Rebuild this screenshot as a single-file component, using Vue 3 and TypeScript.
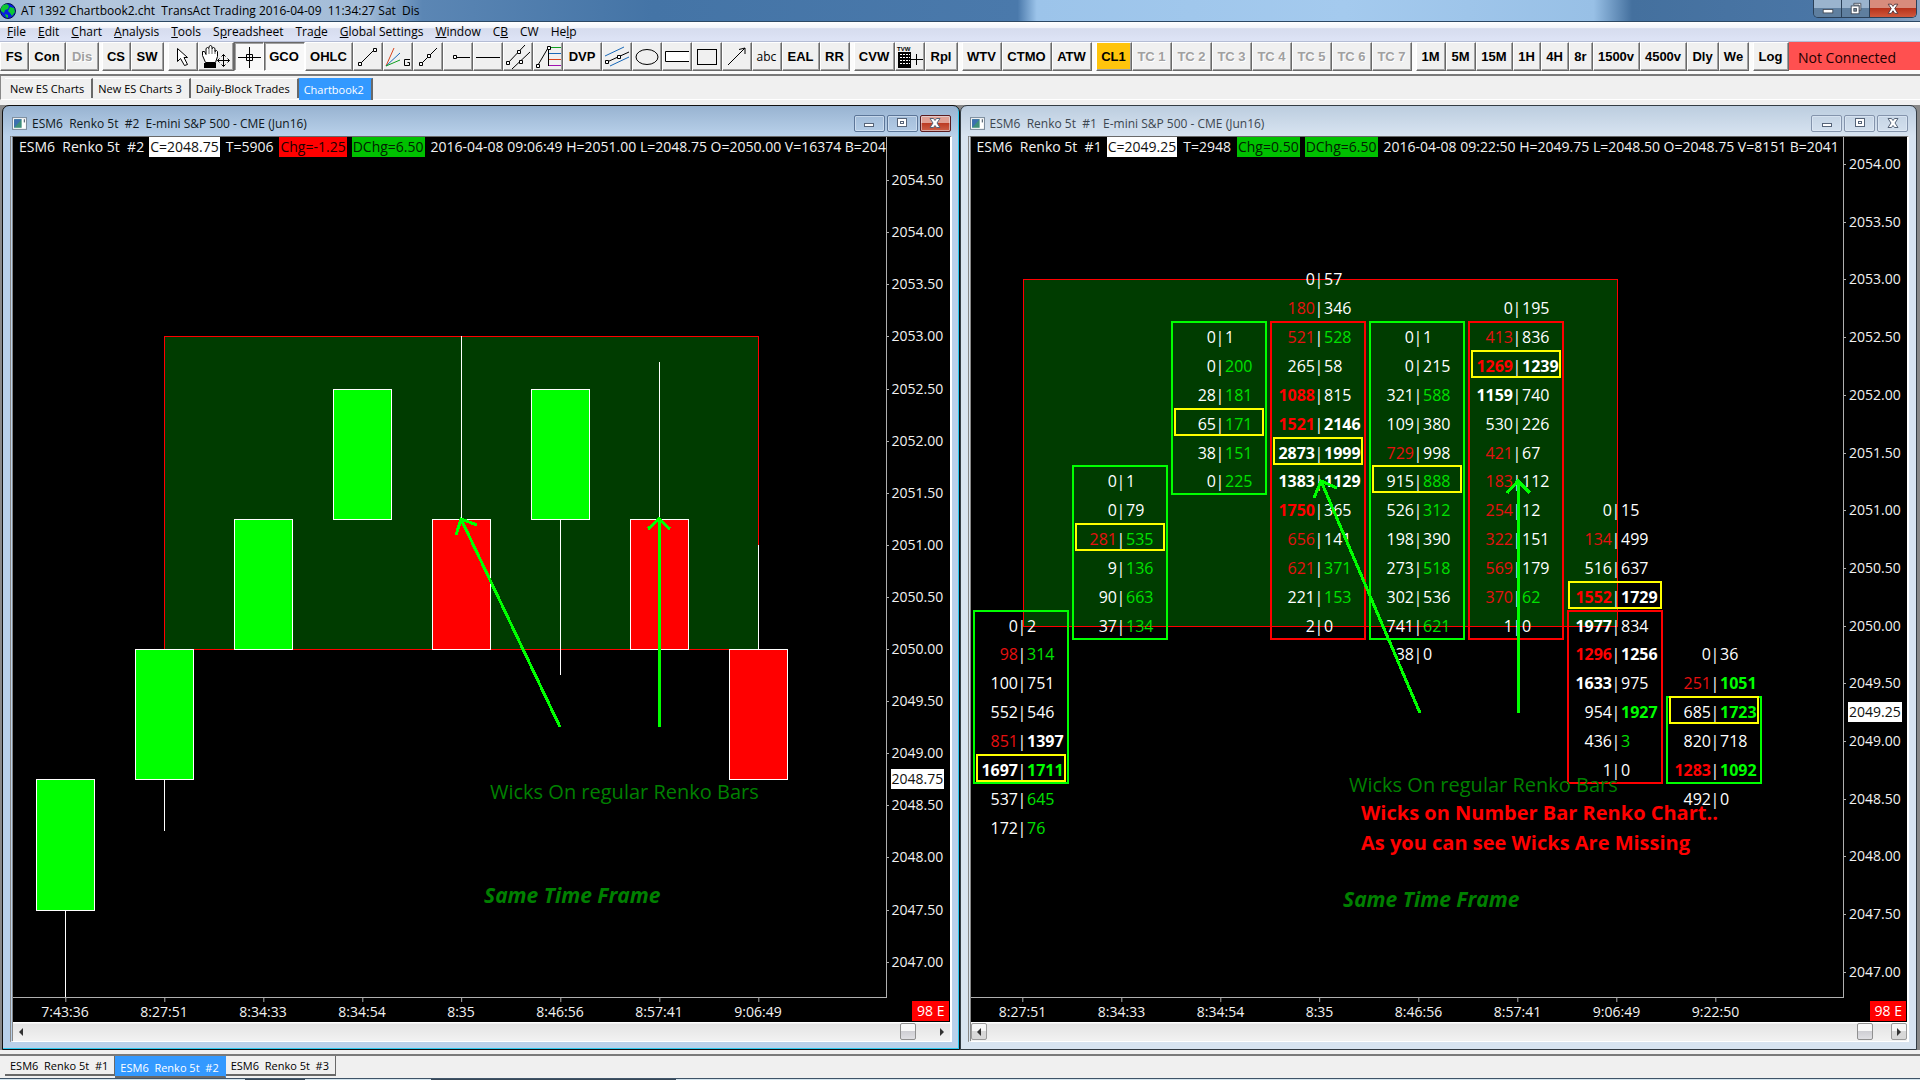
<script setup lang="ts">
import { computed } from 'vue'

interface Tool { id: string; w: number; icon?: string; off?: boolean; down?: boolean; gold?: boolean; thin?: boolean }
interface Candle { open: number; close: number; high?: number; low?: number }
interface Arrow { x1: number; y1: number; x2: number; y2: number; a: [number, number]; b: [number, number] }
interface Note { text: string; x: number; y: number; kind: string }
interface Column { top: number; box: [number, number]; up: boolean; poc: number; rows: string[] }

const menus: [string, string, string][] = [
  ['', 'F', 'ile'], ['', 'E', 'dit'], ['', 'C', 'hart'], ['', 'A', 'nalysis'], ['', 'T', 'ools'],
  ['S', 'p', 'readsheet'], ['Tra', 'd', 'e'], ['', 'G', 'lobal Settings'], ['', 'W', 'indow'],
  ['C', 'B', ''], ['CW', '', ''], ['He', 'l', 'p'],
]

const toolGroups: Tool[][] = [
  [{ id: 'FS', w: 29 }, { id: 'Con', w: 37 }, { id: 'Dis', w: 33, off: true }],
  [{ id: 'CS', w: 29 }, { id: 'SW', w: 33 }],
  [
    { id: 'Pointer', w: 30, icon: 'pointer' }, { id: 'Hand', w: 36, icon: 'hand' },
    { id: 'Crosshair', w: 30, icon: 'cross', down: true }, { id: 'GCO', w: 41, down: true }, { id: 'OHLC', w: 48 },
    { id: 'Line', w: 30, icon: 'line' }, { id: 'Gann fan', w: 30, icon: 'fan' }, { id: 'Ray', w: 30, icon: 'ray' },
    { id: 'Horizontal ray', w: 30, icon: 'hray' }, { id: 'Horizontal line', w: 30, icon: 'hline' },
    { id: 'Parallel lines', w: 30, icon: 'parallel' }, { id: 'Retracement', w: 30, icon: 'fib' },
    { id: 'DVP', w: 39 }, { id: 'Channel', w: 30, icon: 'channel' }, { id: 'Ellipse', w: 30, icon: 'ellipse' },
    { id: 'Extending rectangle', w: 30, icon: 'rect' }, { id: 'Rectangle', w: 30, icon: 'square' },
    { id: 'Arrow', w: 30, icon: 'arrow' }, { id: 'abc', w: 30, thin: true }, { id: 'EAL', w: 38 }, { id: 'RR', w: 30 },
  ],
  [{ id: 'CVW', w: 41 }, { id: 'Trade window', w: 30, icon: 'tvw' }, { id: 'Rpl', w: 33 }],
  [{ id: 'WTV', w: 40 }, { id: 'CTMO', w: 50 }, { id: 'ATW', w: 40 }],
  [
    { id: 'CL1', w: 36, gold: true },
    ...[1, 2, 3, 4, 5, 6, 7].map((n) => ({ id: `TC ${n}`, w: 40, off: true })),
  ],
  [
    { id: '1M', w: 30 }, { id: '5M', w: 30 }, { id: '15M', w: 37 }, { id: '1H', w: 28 }, { id: '4H', w: 28 },
    { id: '8r', w: 24 }, { id: '1500v', w: 47 }, { id: '4500v', w: 47 }, { id: 'Dly', w: 32 }, { id: 'We', w: 30 },
  ],
  [{ id: 'Log', w: 36 }],
]

const bookTabs = ['New ES Charts', 'New ES Charts 3', 'Daily-Block Trades', 'Chartbook2']
const chartTabs = ['ESM6  Renko 5t  #1', 'ESM6  Renko 5t  #2', 'ESM6  Renko 5t  #3']

const STEP = 99
const FIRST = 52
const cx = (i: number): number => FIRST + STEP * i + 0.5

const candles: Candle[] = [
  { open: 2047.5, close: 2048.75, low: 2046 },
  { open: 2048.75, close: 2050, low: 2048.25 },
  { open: 2050, close: 2051.25 },
  { open: 2051.25, close: 2052.5 },
  { open: 2051.25, close: 2050, high: 2053 },
  { open: 2051.25, close: 2052.5, low: 2049.75 },
  { open: 2051.25, close: 2050, high: 2052.75 },
  { open: 2050, close: 2048.75, high: 2051 },
]

// Each row reads bid|ask; a leading "r" marks a red bid, a leading "g" a green ask.
const columns: Column[] = [
  { top: 2050, box: [2050, 2048.75], up: true, poc: 2048.75, rows: ['0|2', 'r98|g314', '100|751', '552|546', 'r851|1397', '1697|g1711', '537|g645', '172|g76'] },
  { top: 2051.25, box: [2051.25, 2050], up: true, poc: 2050.75, rows: ['0|1', '0|79', 'r281|g535', '9|g136', '90|g663', '37|g134'] },
  { top: 2052.5, box: [2052.5, 2051.25], up: true, poc: 2051.75, rows: ['0|1', '0|g200', '28|g181', '65|g171', '38|g151', '0|g225'] },
  { top: 2053, box: [2052.5, 2050], up: false, poc: 2051.5, rows: ['0|57', 'r180|346', 'r521|g528', '265|58', 'r1088|815', 'r1521|2146', '2873|1999', '1383|1129', 'r1750|365', 'r656|141', 'r621|g371', '221|g153', '2|0'] },
  { top: 2052.5, box: [2052.5, 2050], up: true, poc: 2051.25, rows: ['0|1', '0|215', '321|g588', '109|380', 'r729|998', '915|g888', '526|g312', '198|390', '273|g518', '302|536', '741|g621', '38|0'] },
  { top: 2052.75, box: [2052.5, 2050], up: false, poc: 2052.25, rows: ['0|195', 'r413|836', 'r1269|1239', '1159|740', '530|226', 'r421|67', 'r183|112', 'r254|12', 'r322|151', 'r569|179', 'r370|g62', '1|0'] },
  { top: 2051, box: [2050, 2048.75], up: false, poc: 2050.25, rows: ['0|15', 'r134|499', '516|637', 'r1552|1729', '1977|834', 'r1296|1256', '1633|975', '954|g1927', '436|g3', '1|0'] },
  { top: 2049.75, box: [2049.25, 2048.75], up: true, poc: 2049.25, rows: ['0|36', 'r251|g1051', '685|g1723', '820|718', 'r1283|g1092', '492|0'] },
]

const range = (from: number, to: number): number[] =>
  Array.from({ length: (from - to) * 2 + 1 }, (_, i) => from - i * 0.5)

const scale = (base: number, unit: number) => (p: number): number => Math.round(base + (2053 - p) * unit)
const yBars = scale(199.4, 104.2)
const yNums = scale(142.4, 115.4)

const charts = [
  {
    id: 2, active: true, y: yBars, last: 2048.75, prices: range(2054.5, 2047),
    stats: [
      { t: 'C=2048.75', k: 'white' }, { t: 'T=5906', k: '' }, { t: 'Chg=-1.25', k: 'red' }, { t: 'DChg=6.50', k: 'green' },
      { t: '2016-04-08 09:06:49 H=2051.00 L=2048.75 O=2050.00 V=16374 B=2041', k: '' },
    ],
    times: ['7:43:36', '8:27:51', '8:34:33', '8:34:54', '8:35', '8:46:56', '8:57:41', '9:06:49'],
    region: { from: 1, to: 7 },
    arrows: [
      { x1: 547, y1: 590, x2: 448, y2: 382, a: [443, 398], b: [464, 388] },
      { x1: 646, y1: 590, x2: 646, y2: 382, a: [635, 392], b: [657, 392] },
    ] as Arrow[],
    notes: [
      { text: 'Wicks On regular Renko Bars', x: 477, y: 662, kind: 'plain' },
      { text: 'Same Time Frame', x: 471, y: 766, kind: 'slant' },
    ] as Note[],
  },
  {
    id: 1, active: false, y: yNums, last: 2049.25, prices: range(2054, 2047),
    stats: [
      { t: 'C=2049.25', k: 'white' }, { t: 'T=2948', k: '' }, { t: 'Chg=0.50', k: 'green' }, { t: 'DChg=6.50', k: 'green' },
      { t: '2016-04-08 09:22:50 H=2049.75 L=2048.50 O=2048.75 V=8151 B=2041', k: '' },
    ],
    times: ['8:27:51', '8:34:33', '8:34:54', '8:35', '8:46:56', '8:57:41', '9:06:49', '9:22:50'],
    region: { from: 0, to: 6 },
    arrows: [
      { x1: 449, y1: 576, x2: 350, y2: 344, a: [343, 361], b: [366, 351] },
      { x1: 547, y1: 576, x2: 547, y2: 344, a: [536, 356], b: [559, 356] },
    ] as Arrow[],
    notes: [
      { text: 'Wicks On regular Renko Bars', x: 378, y: 655, kind: 'plain' },
      { text: 'Wicks on Number Bar Renko Chart..', x: 390, y: 683, kind: 'alert' },
      { text: 'As you can see Wicks Are Missing', x: 390, y: 713, kind: 'alert' },
      { text: 'Same Time Frame', x: 372, y: 770, kind: 'slant' },
    ] as Note[],
  },
]

const cells = computed(() =>
  columns.flatMap((c, i) =>
    c.rows.map((row, r) => {
      const [bid, ask] = row.split('|')
      const b = bid.replace('r', '')
      const a = ask.replace('g', '')
      return {
        key: `${i}-${r}`, x: FIRST + STEP * i, y: yNums(c.top - r * 0.25) + 6, b, a,
        bc: { red: bid[0] === 'r', big: b.length > 3 }, ac: { lime: ask[0] === 'g', big: a.length > 3 },
      }
    }),
  ),
)

const frames = columns.map((c, i) => {
  const inside = c.poc <= c.box[0]
  return {
    x: FIRST + STEP * i - 49, y: yNums(c.box[0]) - 15, h: yNums(c.box[1]) - yNums(c.box[0]) + 28, up: c.up,
    px: FIRST + STEP * i - (inside ? 46 : 48), pw: inside ? 88 : 92, py: yNums(c.poc) - 15,
  }
})
</script>

<template>
  <div class="app">
    <header class="titlebar">
      <svg class="globe" viewBox="0 0 16 16" aria-hidden="true">
        <circle cx="8" cy="8" r="7.5" fill="#0a1ee0" stroke="#06104a" />
        <path d="M3 2l4-1 2 2-1 3-3 1-1 3-3-2 0-3zM10 4l4 1 1 4-3 4-2-3-2-2zM5 11l3 1 0 3-2-1z" fill="#0dc832" />
      </svg>
      <h1>AT 1392 Chartbook2.cht&nbsp; TransAct Trading 2016-04-09&nbsp; 11:34:27 Sat&nbsp; Dis</h1>
      <div class="app-buttons">
        <button type="button" aria-label="Minimize"><svg viewBox="0 0 16 16"><rect x="2.5" y="8.5" width="11" height="4" fill="#fff" stroke="#444c58" /></svg></button>
        <button type="button" aria-label="Restore"><svg viewBox="0 0 16 16"><path d="M5.500 1.500h8v8h-2v-6h-6z" fill="#fff" stroke="#444c58" /><rect x="2.500" y="4.500" width="9" height="9" fill="#fff" stroke="#444c58" /><rect x="5.500" y="7.500" width="3" height="3" fill="#789" stroke="#444c58" /></svg></button>
        <button type="button" class="close" aria-label="Close"><svg viewBox="0 0 16 16"><path d="M2.500 2.500h3.500l2 2.500 2-2.500h3.500l-3.500 5 3.500 5.500h-3.500l-2-3-2 3h-3.500l3.500-5.500z" fill="#fff" stroke="#4a3038" /></svg></button>
      </div>
    </header>

    <nav class="menubar" aria-label="Main menu">
      <button v-for="m in menus" :key="m.join('')" type="button">{{ m[0] }}<u>{{ m[1] }}</u>{{ m[2] }}</button>
    </nav>

    <div class="toolbar" role="toolbar" aria-label="Tools">
      <div v-for="(g, gi) in toolGroups" :key="gi" class="group">
        <button
          v-for="t in g" :key="t.id" type="button" :aria-label="t.id" :disabled="t.off"
          :class="{ down: t.down, gold: t.gold, thin: t.thin }" :style="{ width: t.w + 'px' }"
        >
          <template v-if="!t.icon">{{ t.id }}</template>
          <svg v-else :width="t.w" height="29" :viewBox="`0 0 ${t.w} 29`" fill="none" stroke="#000">
            <path v-if="t.icon === 'pointer'" d="M9.500 6.500v13l3-3 4 7 3-1-3.500-7h3.500z" fill="#fff" />
            <g v-else-if="t.icon === 'hand'">
              <path d="M7.500 20.500l-3-7v-4h2l1.500 3v-6l1.500-1 1.500 1v-2l1.500-1 1.500 1v2l1.500-1 1.500 1v3l1.500-1 1 1v5l-2 6z" fill="#fff" />
              <path d="M11 7v5M14 6v6M17 8v4" stroke-width=".6" />
              <rect x="6.500" y="21.500" width="11" height="4" fill="#000" />
              <path d="M19.500 18.500h12M25.500 12.500v12M23.500 14.500l2-2 2 2M23.500 22.500l2 2 2-2M21.500 16.500l-2 2 2 2M29.500 16.500l2 2-2 2" />
            </g>
            <path v-else-if="t.icon === 'cross'" d="M4 15.500h23M15.500 5v21M12.500 12.500h6v6h-6z" />
            <g v-else-if="t.icon === 'line'"><path d="M7 22L21 8" /><path d="M5.500 20.500h3v3h-3zM20.500 6.500h3v3h-3z" fill="#fff" /></g>
            <g v-else-if="t.icon === 'fan'">
              <path d="M3 24L11 6" stroke="#d8441c" /><path d="M3 24L17 11" stroke="#1868b8" /><path d="M3 24l14-6" stroke="#10a020" />
              <path d="M27 17.500h-5.500v6h5v-3h-2" />
            </g>
            <g v-else-if="t.icon === 'ray'"><path d="M8 22L24 6" /><path d="M6.500 20.500h3v3h-3zM14.500 12.500h3v3h-3z" fill="#fff" /></g>
            <g v-else-if="t.icon === 'hray'"><path d="M13 15.500h14" /><path d="M10.500 13.500h3v3h-3z" fill="#fff" /></g>
            <path v-else-if="t.icon === 'hline'" d="M3 15.500h24" />
            <g v-else-if="t.icon === 'parallel'">
              <path d="M4 22L22 3M9 27L27 10" /><path d="M3.500 19.500h3v3h-3zM14.500 8.500h3v3h-3zM16.500 18.500h3v3h-3z" fill="#fff" />
            </g>
            <g v-else-if="t.icon === 'fib'">
              <path d="M5 23L15 6M15.500 6v18" /><path d="M17 5.500h11" stroke="#10a020" /><path d="M16 11.500h12" stroke="#1868b8" />
              <path d="M16 17.500h12" stroke="#d8441c" /><path d="M16 23.500h12" stroke="#a010b0" />
              <path d="M3.500 22.500h3v3h-3zM14.500 4.500h3v3h-3z" fill="#fff" />
            </g>
            <g v-else-if="t.icon === 'channel'">
              <path d="M3 14L22 5M8 24l19-9" stroke="#1868b8" /><path d="M5 20l22-10" />
              <path d="M3.500 18.500h3v3h-3zM15.500 13.500h3v3h-3z" fill="#fff" />
            </g>
            <ellipse v-else-if="t.icon === 'ellipse'" cx="15" cy="15" rx="11" ry="7.500" />
            <path v-else-if="t.icon === 'rect'" d="M27 9.500H3.500v10H27" fill="#fff" />
            <rect v-else-if="t.icon === 'square'" x="5.500" y="7.500" width="19" height="15" />
            <path v-else-if="t.icon === 'arrow'" d="M6 23L23 6M17 7.500l6-1.500v6" />
            <g v-else>
              <text x="2" y="9" font-size="6" fill="#000" stroke="none">TVW</text>
              <rect x="3.500" y="10.500" width="12" height="15" fill="#000" />
              <path d="M5 12.500h10M5 15.500h10M5 18.500h10M5 21.500h10" stroke="#fff" stroke-dasharray="2 1" />
              <path d="M16 17.500h12M21.500 12v11" />
            </g>
          </svg>
        </button>
      </div>
      <output class="status">Not Connected</output>
    </div>

    <nav class="booktabs" aria-label="Chartbooks">
      <button v-for="(b, i) in bookTabs" :key="b" type="button" :class="{ on: i === 3 }">{{ b }}</button>
    </nav>

    <main class="workspace">
      <section v-for="c in charts" :key="c.id" class="win" :class="{ active: c.active }">
        <header>
          <svg class="doc" viewBox="0 0 14 12" aria-hidden="true">
            <rect x=".5" y=".5" width="13" height="11" fill="#fff" stroke="#7c8c9c" />
            <rect x="2" y="2" width="7" height="8" fill="#3e8f7a" /><path d="M2 10V2h7z" fill="#3c6fb0" /><rect x="11" y="2" width="1" height="3" fill="#456" />
          </svg>
          <h2>ESM6&nbsp; Renko 5t&nbsp; #{{ c.id }}&nbsp; E-mini S&amp;P 500 - CME (Jun16)</h2>
          <div class="win-buttons">
            <button type="button" aria-label="Minimize"><svg viewBox="0 0 14 14"><rect x="2.500" y="7.500" width="9" height="3" fill="#fff" stroke="#566478" /></svg></button>
            <button type="button" aria-label="Maximize"><svg viewBox="0 0 14 14"><rect x="2.500" y="2.500" width="9" height="8" fill="#fff" stroke="#566478" /><rect x="5.500" y="5.500" width="3" height="2" fill="#fff" stroke="#566478" /></svg></button>
            <button type="button" class="close" aria-label="Close"><svg viewBox="0 0 14 14"><path d="M2 2.500h3.500l1.500 2 1.500-2h3.500l-3 4.500 3 4.500h-3.500l-1.500-2-1.500 2h-3.500l3-4.500z" fill="#fff" stroke="#566478" /></svg></button>
          </div>
        </header>

        <div class="bevel">
          <div class="chart">
            <div class="plot">
              <svg class="canvas" aria-label="Price chart">
                <rect
                  class="region" :x="cx(c.region.from)" :y="c.y(2053) + 0.5"
                  :width="(c.region.to - c.region.from) * STEP" :height="c.y(2050) - c.y(2053)"
                />
                <g v-if="c.id === 2" class="candles">
                  <g v-for="(k, i) in candles" :key="i">
                    <line v-if="k.high || k.low" :x1="cx(i)" :x2="cx(i)" :y1="c.y(k.high ?? k.close)" :y2="c.y(k.low ?? k.close)" />
                    <rect
                      :class="k.close > k.open ? 'up' : 'dn'" :x="cx(i) - 29" :y="c.y(Math.max(k.open, k.close)) + 0.5"
                      width="58" :height="Math.abs(c.y(k.open) - c.y(k.close))"
                    />
                  </g>
                </g>
                <template v-else>
                  <g v-for="(f, i) in frames" :key="i" class="frames">
                    <rect :class="f.up ? 'up' : 'dn'" :x="f.x" :y="f.y" width="94" :height="f.h" />
                    <rect class="poc" :x="f.px" :y="f.py" :width="f.pw" height="26" />
                  </g>
                  <g v-for="d in cells" :key="d.key" class="cell">
                    <text :x="d.x - 5" :y="d.y" text-anchor="end" :class="d.bc">{{ d.b }}</text>
                    <text :x="d.x - 1" :y="d.y" text-anchor="middle">|</text>
                    <text :x="d.x + 4" :y="d.y" :class="d.ac">{{ d.a }}</text>
                  </g>
                </template>
                <g class="arrows">
                  <template v-for="a in c.arrows" :key="a.x1">
                    <line :x1="a.x1" :y1="a.y1" :x2="a.x2" :y2="a.y2" />
                    <polyline :points="`${a.a} ${a.x2},${a.y2} ${a.b}`" />
                  </template>
                </g>
                <text v-for="n in c.notes" :key="n.text" :class="n.kind" :x="n.x" :y="n.y">{{ n.text }}</text>
              </svg>
              <div class="stats">
                <span>ESM6&nbsp; Renko 5t&nbsp; #{{ c.id }}</span>
                <span v-for="s in c.stats" :key="s.t" :class="s.k">{{ s.t }}</span>
              </div>
            </div>
            <div class="prices">
              <span v-for="p in c.prices" :key="p" class="tick" :style="{ top: c.y(p) + 'px' }">{{ p.toFixed(2) }}</span>
              <span class="last" :style="{ top: c.y(c.last) + 'px' }">{{ c.last.toFixed(2) }}</span>
            </div>
            <div class="timebar">
              <span v-for="(t, i) in c.times" :key="t" :style="{ left: FIRST + STEP * i + 'px' }">{{ t }}</span>
              <b>98 E</b>
            </div>
          </div>
          <div class="scroll">
            <button type="button" aria-label="Scroll left"><i class="left"></i></button>
            <span class="track"></span>
            <span class="thumb"></span>
            <button type="button" class="end" aria-label="Scroll right"><i class="right"></i></button>
          </div>
        </div>
      </section>
    </main>

    <nav class="charttabs" aria-label="Open charts">
      <button v-for="(t, i) in chartTabs" :key="t" type="button" :class="{ on: i === 1 }">{{ t }}</button>
    </nav>
    <footer class="edge"></footer>
  </div>
</template>

<style>
body { margin: 0; background: #f0f0f0; }
</style>

<style scoped>
.app { display: flex; flex-direction: column; min-height: 100vh; overflow: hidden; background: #f0f0f0; color: #000; font-family: "Open Sans", "Noto Sans", sans-serif; font-size: 12px; }
*, *::before { box-sizing: border-box; }
button { margin: 0; padding: 0; border: 0; background: none; color: inherit; font: inherit; }
h1, h2 { margin: 0; font-size: 12px; font-weight: 400; white-space: pre; }

.titlebar { display: flex; align-items: center; height: 22px; border-bottom: 1px solid #2c4864; background: linear-gradient(90deg, #9fb9d6 0, #b4c7dd 5%, #a3bcd8 19%, #5b86b4 22%, #4474a6 34%, #4a79ab 53%, #9cc4ea 54%, #a4caee 70%, #98c0e6 83%, #44709e 85%, #4a76a6 95%, #8aa6c4 100%); }
.globe { width: 16px; height: 16px; margin: 0 5px 0 0; }
.titlebar h1 { flex: 1; }
.app-buttons { display: flex; align-self: flex-start; margin-right: 3px; border: 1px solid #2a4058; border-top: 0; border-radius: 0 0 5px 5px; overflow: hidden; }
.app-buttons button { display: grid; place-items: center; width: 28px; height: 17px; border-right: 1px solid #2a4058; background: linear-gradient(#9ab4ce 50%, #5f7f9f 50%); }
.app-buttons svg { width: 14px; height: 14px; }
.app-buttons .close { width: 46px; border: 0; background: linear-gradient(#d88c7c 45%, #b8341c 50%, #d0583c); }

.menubar { display: flex; height: 20px; padding-left: 1px; border-bottom: 1px solid #b4bcd4; background: linear-gradient(#fff 0, #f2f4fa 30%, #d6dcee 35%, #dee4f6 100%); font-size: 12px; }
.menubar button { padding: 0 6px; line-height: 20px; }

.toolbar { display: flex; gap: 4px; height: 34px; padding-bottom: 4px; border-bottom: 2px solid #7a7a7a; background: #fbfbfb; font-family: "Liberation Sans", sans-serif; font-size: 13px; font-weight: 700; }
.group { display: flex; }
.group:first-child { margin-right: -1px; }
.group button { display: grid; place-items: center; height: 29px; padding-right: 1px; border: 1px solid; border-color: #fff #696969 #696969 #fff; box-shadow: inset -1px -1px #a0a0a0; background: #f0f0f0; white-space: nowrap; }
.group button svg { display: block; margin: -1px; }
.group button:disabled { color: #a0a0a0; text-shadow: 1px 1px #fff; }
.group .down { border-color: #696969 #fff #fff #696969; box-shadow: inset 1px 1px #a0a0a0; background: #f8f8f8; }
.group .gold { background: #ffc40c; }
.group .thin { font-weight: 400; font-family: "Open Sans", sans-serif; font-size: 12px; }
.group:nth-last-child(2) { margin-right: -4px; }
.status { flex: 1; padding-left: 9px; background: #ff5050; color: #200; font: 14px/31px "Open Sans", sans-serif; white-space: nowrap; }

.booktabs { display: flex; align-items: flex-start; height: 24px; margin-bottom: 5px; padding: 2px 0 0 4px; border-left: 1px solid #888; border-bottom: 1px solid #fff; font-size: 11px; }
.booktabs button { height: 20px; padding: 0 7px 0 5px; border-top: 1px solid #fff; border-right: 2px solid #696969; line-height: 20px; }
.booktabs .on { height: 22px; border-top-color: #3399ff; background: #3399ff; color: #fff; line-height: 16px; }

.workspace { display: flex; flex: 1; padding-right: 3px; border-left: 2px solid #888; background: #888; }
.win { display: flex; flex: 1; flex-direction: column; min-width: 0; padding: 0 7px 7px; border: 1px solid #333c44; border-radius: 7px 7px 0 0; background: linear-gradient(#bccddf 0, #d8e4f1 30px); color: #3c4650; }
.win.active { border-color: #111; box-shadow: inset -1px -1px #2cc8ee; background: linear-gradient(#98b3d1 0, #b9d1ea 30px); color: #101820; }
.win header { display: flex; align-items: center; height: 30px; padding: 4px 0 0 2px; }
.doc { width: 15px; height: 13px; margin-right: 5px; }
.win h2 { flex: 1; overflow: hidden; }
.win-buttons { display: flex; gap: 2px; padding-right: 1px; }
.win-buttons button { display: grid; place-items: center; width: 31px; height: 17px; border: 1px solid #8494ac; border-radius: 2px; box-shadow: inset 0 0 0 1px #e4eefa88; }
.win-buttons svg { width: 14px; height: 14px; }
.active .win-buttons button { border-color: #5c7698; }
.active .win-buttons .close { border-color: #5a1c20; background: linear-gradient(#e0a094 45%, #bc3c24 50%, #cc6048); }

.bevel { display: flex; flex: 1; flex-direction: column; border: 1px solid #fff; border-top-color: #696969; border-right-width: 2px; border-left: 3px double #888; }
.chart { display: grid; flex: 1; grid-template: 1fr 24px / 1fr 64px; background: #000; color: #f2f2f2; font-size: 14px; line-height: 20px; }
.plot { position: relative; min-width: 0; overflow: hidden; border-bottom: 1px solid #b0b0b0; }
.canvas { position: absolute; width: 100%; height: 100%; shape-rendering: crispEdges; }
.stats { position: relative; display: flex; gap: 5px; padding-left: 5px; white-space: nowrap; }
.stats span { padding: 0 1px; }
.stats span:first-child { padding-right: 0; }
.stats .white { background: #fff; color: #101010; }
.stats .red { background: #f00; color: #200; }
.stats .green { background: #00c000; color: #020; }
.prices { position: relative; border-left: 1px solid #b0b0b0; }
.prices span { position: absolute; left: 4px; transform: translateY(-50%); }
.prices .tick { left: 0; padding-left: 5px; }
.prices .tick::before { content: ""; position: absolute; top: 10px; left: 0; width: 2px; height: 1px; background: #b0b0b0; }
.prices .last { left: 4px; padding: 0 1px; background: #fff; color: #101010; line-height: 20px; }
.timebar { position: relative; grid-column: 1 / 3; text-align: right; }
.timebar span { position: absolute; top: 4px; transform: translateX(-50%); }
.timebar span::before { content: ""; position: absolute; top: -4px; left: 50%; width: 1px; height: 4px; background: #b0b0b0; }
.timebar b { display: inline-block; margin: 3px 1px 0 0; padding: 0 4px 0 5px; background: #f00; color: #fff; font-weight: 400; }

.region { fill: #003c00; stroke: #f00; }
.candles { stroke: #fff; }
.candles .up { fill: #0f0; }
.candles .dn { fill: #f00; }
.frames { fill: none; stroke-width: 2; }
.frames .up { stroke: #0f0; }
.frames .dn { stroke: #f00; }
.frames .poc { stroke: #ff0; }
.cell { fill: #fff; font-size: 16px; }
.cell .red { fill: #e61010; }
.cell .lime { fill: #00e000; }
.cell .big { font-weight: 700; }
.cell .big.red { fill: #f00; }
.cell .big.lime { fill: #0f0; }
.arrows { fill: none; stroke: #0f0; stroke-width: 3; }
.plain { fill: #008000; font-size: 20px; }
.slant { fill: #008000; font-size: 21px; font-style: italic; font-weight: 700; }
.alert { fill: #f00; font-size: 20px; font-weight: 700; }

.scroll { display: flex; height: 19px; padding: 1px 0; background: linear-gradient(#fff 1px, #e4e4e4 2px, #f2f2f2 100%); }
.scroll button { display: grid; place-items: center; width: 16px; border: 1px solid #9a9a9a; border-radius: 2px; background: linear-gradient(#f6f6f6 50%, #d8d8d8 50%); }
.active .scroll button { border-color: transparent; background: none; }
.scroll .track { flex: 1; }
.scroll .thumb { width: 16px; border: 1px solid #909090; border-radius: 2px; background: linear-gradient(#f8f8f8 45%, #cfcfd4 50%, #e0e0e4); }
.scroll .end { margin-left: 18px; }
.scroll i { border: 4px solid transparent; }
.scroll .left { border-left: 0; border-right-color: #333; }
.scroll .right { border-right: 0; border-left-color: #333; }

.charttabs { display: flex; align-items: flex-start; height: 24px; margin-top: 4px; padding-left: 5px; border-top: 2px solid #7a7a7a; font-size: 11px; }
.charttabs button { height: 20px; padding: 0 6px 0 5px; border: solid #696969; border-width: 0 1px 2px 0; line-height: 19px; white-space: pre; }
.charttabs .on { height: 22px; border-color: #3399ff #3399ff #696969; background: #3399ff; color: #fff; line-height: 23px; }
.edge { height: 2px; border-top: 1px solid #3f5468; background: linear-gradient(90deg, #d5e5ee 0 245px, #384858 245px 305px, #d5e5ee 305px 431px, #384858 431px 676px, #d5e5ee 676px); }
</style>
